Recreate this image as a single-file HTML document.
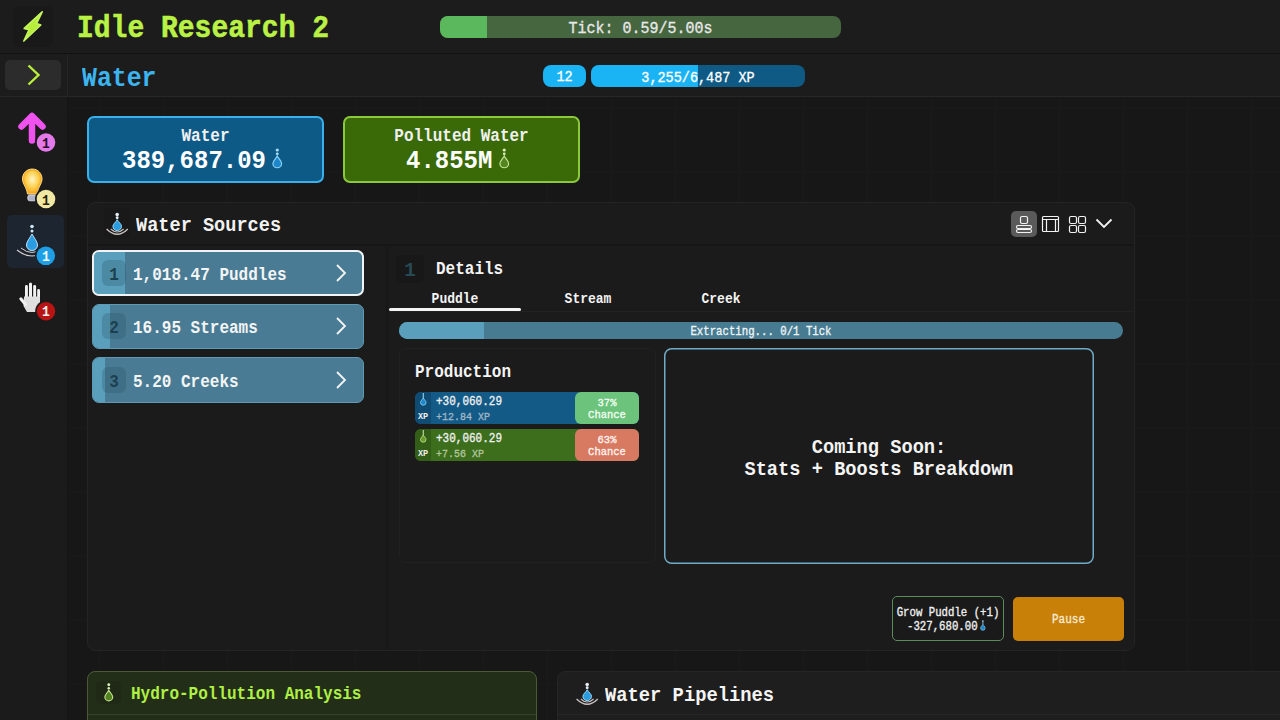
<!DOCTYPE html>
<html><head><meta charset="utf-8">
<style>
*{box-sizing:border-box;margin:0;padding:0}
html,body{width:1280px;height:720px;overflow:hidden}
body{background-color:#171717;background-image:linear-gradient(to right,#1b1b1b 1px,transparent 1px),linear-gradient(to bottom,#1a1a1a 1px,transparent 1px);background-size:64px 64px;background-position:35px 43px;font-family:"Liberation Mono",monospace;color:#f0f0f0;position:relative}
.a{position:absolute}
.b{font-weight:bold}
.x{white-space:pre;line-height:1;position:absolute;transform:scaleY(1.11);transform-origin:0 0.766em}
.m{-webkit-text-stroke:0.3px currentColor}
.c{text-align:center}
svg{position:absolute;overflow:visible}
</style></head><body>
<svg width="0" height="0" style="position:absolute">
  <defs>
    <symbol id="wsrc" viewBox="0 0 22 24" overflow="visible">
      <circle cx="11.2" cy="2.5" r="1.8" fill="#e4eef4"/>
      <circle cx="11.2" cy="5.8" r="1.45" fill="#e4eef4"/>
      <path d="M11.2 7.7 C10 10.2 6.9 12 6.9 14.3 A4.3 4.3 0 0 0 15.5 14.3 C15.5 12 12.4 10.2 11.2 7.7 Z" fill="#2a9de0" stroke="#9ad6f4" stroke-width="1"/>
      <path d="M0.6 17 Q11.2 27.5 21.8 17" fill="none" stroke="#cac0c0" stroke-width="1.3"/>
      <path d="M4.8 17 Q11.2 23 17.6 17" fill="none" stroke="#cac0c0" stroke-width="1.1"/>
    </symbol>
    <symbol id="drop" viewBox="0 0 11 21" overflow="visible">
      <circle cx="5.25" cy="2" r="1.6" fill="#a8e0f8"/>
      <circle cx="5.25" cy="5.8" r="1.4" fill="#a8e0f8"/>
      <path d="M5.25 7.9 C4 10.5 0.9 12.8 0.9 15.4 A4.35 4.35 0 0 0 9.6 15.4 C9.6 12.8 6.5 10.5 5.25 7.9 Z" fill="#1e86cc" stroke="#8ad4f4" stroke-width="1.2"/>
    </symbol>
    <symbol id="pdrop" viewBox="0 0 11 21" overflow="visible">
      <circle cx="5.25" cy="2" r="1.6" fill="#d8ecb8"/>
      <circle cx="5.25" cy="5.8" r="1.4" fill="#d8ecb8"/>
      <path d="M5.25 7.9 C4 10.5 0.9 12.8 0.9 15.4 A4.35 4.35 0 0 0 9.6 15.4 C9.6 12.8 6.5 10.5 5.25 7.9 Z" fill="#548420" stroke="#c4e494" stroke-width="1.2"/>
    </symbol>
  </defs>
</svg>

<!-- ===== header ===== -->
<div class="a" style="left:0;top:0;width:1280px;height:53px;background:#1c1c1c"></div>
<div class="a" style="left:0;top:53px;width:1280px;height:1px;background:#111"></div>
<div class="a" style="left:13px;top:6px;width:40px;height:41px;background:#191919;border-radius:6px"></div>
<svg style="left:0;top:0" width="60" height="50" viewBox="0 0 60 50">
  <path d="M42.2 11.8 L24.2 28.4 L29 29.8 L23.8 41 L40.8 25 L36.6 23.4 Z" fill="#b6ee3a" stroke="#c4f560" stroke-width="1.6" stroke-linejoin="round"/>
</svg>
<div class="x b" style="left:77px;top:16px;font-size:28px;color:#b9f245;-webkit-text-stroke:0.5px #b9f245">Idle Research 2</div>
<div class="a" style="left:440px;top:16px;width:401px;height:22px;border-radius:8px;background:#46663f;overflow:hidden">
  <div class="a" style="left:0;top:0;width:47px;height:22px;background:#5cb85c"></div>
</div>
<div class="x m c" style="left:440px;top:22px;width:401px;font-size:15px;color:#e8e8e8">Tick: 0.59/5.00s</div>

<div class="a" style="left:0;top:54px;width:1280px;height:43px;background:#1c1c1c"></div>
<div class="a" style="left:0;top:96px;width:1280px;height:1px;background:#272727"></div>
<div class="a" style="left:67px;top:54px;width:1px;height:42px;background:#242424"></div>
<div class="a" style="left:5px;top:60px;width:56px;height:30px;background:#2c2c2c;border-radius:5px"></div>
<svg style="left:26px;top:64px" width="16" height="22" viewBox="0 0 16 22">
  <path d="M2.5 1.5 L12.5 11 L2.5 20.5" fill="none" stroke="#b8f03c" stroke-width="2.4"/>
</svg>
<div class="x b" style="left:82px;top:67px;font-size:24.8px;color:#3cb4f0">Water</div>
<div class="a" style="left:543px;top:65px;width:43px;height:22px;border-radius:8px;background:#1ab4f5"></div>
<div class="x m c" style="left:543px;top:71px;width:43px;font-size:13.5px;color:#fff">12</div>
<div class="a" style="left:591px;top:65px;width:214px;height:22px;border-radius:8px;background:#0e5a85;overflow:hidden">
  <div class="a" style="left:0;top:0;width:107px;height:22px;background:#1ab4f5"></div>
</div>
<div class="x m c" style="left:591px;top:72px;width:214px;font-size:13.5px;color:#fff">3,255/6,487 XP</div>

<!-- ===== sidebar ===== -->
<div class="a" style="left:0;top:97px;width:67px;height:623px;background:#1b1b1b"></div>
<div class="a" style="left:67px;top:97px;width:1px;height:623px;background:#141414"></div>
<div class="a" style="left:7px;top:215px;width:57px;height:53px;background:#1c2530;border-radius:5px"></div>
<svg style="left:0;top:97px" width="67" height="240" viewBox="0 97 67 240">
  <path d="M21.5 126.5 L32 116 L42.5 126.5 M32 117 V140.5" fill="none" stroke="#ef52ef" stroke-width="6.5" stroke-linecap="round" stroke-linejoin="round"/>
  <circle cx="46" cy="142.5" r="11" fill="#1b1b1b"/>
  <circle cx="46" cy="142.5" r="9.3" fill="#e47ae9"/>
  <path d="M32.3 169 C26.5 169 22.5 173.5 22.5 179 C22.5 184 26.5 187 27.5 194 L37 194 C38 187 42 184 42 179 C42 173.5 38 169 32.3 169 Z" fill="#f7ae1c" stroke="#fbd88a" stroke-width="1"/>
  <defs><radialGradient id="bg1" cx="0.5" cy="0.4" r="0.6"><stop offset="0" stop-color="#fff6c8"/><stop offset="0.6" stop-color="#fcd050"/><stop offset="1" stop-color="#f6a820"/></radialGradient></defs><path d="M32.3 170.5 C27.5 170.5 24 174.5 24 179 C24 183.5 27.5 186.5 28.3 193 L36.3 193 C37.1 186.5 40.6 183.5 40.6 179 C40.6 174.5 37.1 170.5 32.3 170.5 Z" fill="url(#bg1)"/>
  <rect x="27.8" y="195" width="8.8" height="5.8" rx="2" fill="#b0b4c8" stroke="#e8e8f0" stroke-width="0.8"/>
  <circle cx="46" cy="199" r="11" fill="#1b1b1b"/>
  <circle cx="46" cy="199" r="9.3" fill="#efe7a2"/>
  <circle cx="32" cy="226.5" r="1.8" fill="#d0e8f8"/>
  <circle cx="32" cy="231" r="1.5" fill="#d0e8f8"/>
  <path d="M32 234 C30 238 26.5 241.5 26.5 245 A5.5 5.5 0 0 0 37.5 245 C37.5 241.5 34 238 32 234 Z" fill="#2a9ce2" stroke="#c0e4f8" stroke-width="1"/>
  <path d="M17 250 Q32 262 47 250" fill="none" stroke="#d8d0d0" stroke-width="1.2"/>
  <path d="M21 248 Q32 257 43 248" fill="none" stroke="#d8d0d0" stroke-width="1"/>
  <circle cx="45.8" cy="255.8" r="11" fill="#1c2530"/>
  <circle cx="45.8" cy="255.8" r="9.3" fill="#1e9fe6"/>
  <g fill="#f2f2f2"><rect x="25" y="285" width="2.9" height="14" rx="1.4"/><rect x="29" y="282.5" width="3" height="16" rx="1.5"/><rect x="33.2" y="285" width="2.9" height="14" rx="1.4"/><rect x="37.2" y="289" width="2.8" height="10" rx="1.4"/>
  <path d="M24 296.5 L40 296.5 L40 305 L37.5 312 L27 312 L23.5 306 Z" fill="#e0e0e0"/></g>
  <path d="M20.8 298.8 L25.5 304.5" stroke="#f2f2f2" stroke-width="3" stroke-linecap="round"/>
  <circle cx="46" cy="311.2" r="10.8" fill="#1b1b1b"/>
  <circle cx="46" cy="311.2" r="9.2" fill="#b81414"/>
</svg>
<div class="x b c" style="left:36px;top:138px;width:20px;font-size:13px;color:#2a0a2a">1</div>
<div class="x b c" style="left:36px;top:195px;width:20px;font-size:13px;color:#2a2208">1</div>
<div class="x b c" style="left:36px;top:251px;width:20px;font-size:13px;color:#f4f8fc">1</div>
<div class="x b c" style="left:36px;top:306px;width:20px;font-size:13px;color:#f8f0f0">1</div>

<!-- ===== resource cards ===== -->
<div class="a" style="left:87px;top:116px;width:237px;height:67px;border:2px solid #3ab0ea;border-radius:7px;background:#0e5a87"></div>
<div class="x b c" style="left:87px;top:129px;width:237px;font-size:16px;color:#f0f0f0">Water</div>
<div class="x b" style="left:122px;top:150px;font-size:24px;color:#fff">389,687.09</div>
<svg style="left:272px;top:148px" width="11" height="21"><use href="#drop"/></svg>

<div class="a" style="left:343px;top:116px;width:237px;height:67px;border:2px solid #8cc83c;border-radius:7px;background:#3a6a08"></div>
<div class="x b c" style="left:343px;top:129px;width:237px;font-size:16px;color:#f0f0f0">Polluted Water</div>
<div class="x b" style="left:406px;top:150px;font-size:24px;color:#fff">4.855M</div>
<svg style="left:499px;top:148px" width="11" height="21"><use href="#pdrop"/></svg>
<!-- ===== main panel ===== -->
<div class="a" style="left:87px;top:202px;width:1048px;height:449px;background:#1b1b1b;border:1px solid #242424;border-radius:8px"></div>
<div class="a" style="left:88px;top:244px;width:1046px;height:2px;background:#161616"></div>
<div class="a" style="left:104px;top:208px;width:26px;height:31px;background:#191919;border-radius:5px"></div>
<svg style="left:106px;top:212px" width="22" height="24"><use href="#wsrc"/></svg>
<div class="x b" style="left:136px;top:218px;font-size:18.6px;color:#f2f2f2">Water Sources</div>

<div class="a" style="left:1011px;top:211px;width:26px;height:26px;background:#5a5a5a;border-radius:5px"></div>
<svg style="left:1011px;top:211px" width="110" height="26" viewBox="0 0 110 26" fill="none" stroke="#f2f2f2" stroke-width="1.2">
  <rect x="9.5" y="5.5" width="7" height="7" rx="1.5"/>
  <rect x="5.5" y="14.5" width="15" height="3" rx="1.5"/>
  <rect x="5.5" y="18.5" width="15" height="3" rx="1.5"/>
  <rect x="31.5" y="5.5" width="16" height="15" rx="1"/>
  <path d="M31.5 8.5 H47.5 M35.5 8.5 V20.5 M44.5 8.5 V20.5"/>
  <rect x="58.5" y="5.5" width="7" height="7" rx="1.5"/>
  <rect x="67.5" y="5.5" width="7" height="7" rx="1.5"/>
  <rect x="58.5" y="14.5" width="7" height="7" rx="1.5"/>
  <rect x="67.5" y="14.5" width="7" height="7" rx="1.5"/>
  <path d="M85.5 8.5 L93 16 L100.5 8.5" stroke-width="1.8"/>
</svg>

<div class="a" style="left:386px;top:246px;width:2px;height:404px;background:#171717"></div>

<div class="a" style="left:92px;top:250px;width:272px;height:46px;border:2px solid #f0f4f6;border-radius:7px;background:#497c94;overflow:hidden">
  <div class="a" style="left:0;top:0;width:31px;height:46px;background:#5aa0bc"></div>
</div>
<div class="a" style="left:102px;top:260px;width:24px;height:26px;background:rgba(40,80,100,0.28);border-radius:6px"></div>
<div class="x b c" style="left:104px;top:268px;width:20px;font-size:16px;color:#1c4050">1</div>
<div class="x b" style="left:133px;top:268px;font-size:16px;color:#f4f4f4">1,018.47 Puddles</div>

<div class="a" style="left:92px;top:304px;width:272px;height:45px;border:1.5px solid #5f9ab4;border-radius:7px;background:#497c94;overflow:hidden">
  <div class="a" style="left:0;top:0;width:17px;height:46px;background:#5aa0bc"></div>
</div>
<div class="a" style="left:102px;top:313px;width:24px;height:26px;background:rgba(40,80,100,0.28);border-radius:6px"></div>
<div class="x b c" style="left:104px;top:321px;width:20px;font-size:16px;color:#1c4050">2</div>
<div class="x b" style="left:133px;top:321px;font-size:16px;color:#f4f4f4">16.95 Streams</div>

<div class="a" style="left:92px;top:357px;width:272px;height:46px;border:1.5px solid #5f9ab4;border-radius:7px;background:#497c94;overflow:hidden">
  <div class="a" style="left:0;top:0;width:12px;height:46px;background:#5aa0bc"></div>
</div>
<div class="a" style="left:102px;top:367px;width:24px;height:26px;background:rgba(40,80,100,0.28);border-radius:6px"></div>
<div class="x b c" style="left:104px;top:375px;width:20px;font-size:16px;color:#1c4050">3</div>
<div class="x b" style="left:133px;top:375px;font-size:16px;color:#f4f4f4">5.20 Creeks</div>

<svg style="left:330px;top:262px" width="22" height="130" viewBox="0 0 22 130" fill="none" stroke="#f4f4f4" stroke-width="1.8">
  <path d="M7 3 L15 11 L7 19"/>
  <path d="M7 56 L15 64 L7 72"/>
  <path d="M7 110 L15 118 L7 126"/>
</svg>

<!-- details -->
<div class="a" style="left:396px;top:255px;width:28px;height:28px;background:#181818;border-radius:5px"></div>
<div class="x b c" style="left:396px;top:262px;width:28px;font-size:19px;color:#264a56">1</div>
<div class="x b" style="left:436px;top:262px;font-size:16px;color:#f4f4f4">Details</div>
<div class="x b c" style="left:389px;top:293px;width:132px;font-size:13px;color:#f4f4f4">Puddle</div>
<div class="x b c" style="left:522px;top:293px;width:132px;font-size:13px;color:#f4f4f4">Stream</div>
<div class="x b c" style="left:655px;top:293px;width:132px;font-size:13px;color:#f4f4f4">Creek</div>
<div class="a" style="left:389px;top:311px;width:745px;height:1px;background:#222"></div>
<div class="a" style="left:389px;top:308px;width:132px;height:3px;background:#f4f4f4;border-radius:2px"></div>

<div class="a" style="left:399px;top:322px;width:724px;height:17px;border-radius:9px;background:#467b91;overflow:hidden">
  <div class="a" style="left:0;top:0;width:85px;height:17px;background:#5aa0bc"></div>
</div>
<div class="x m c" style="left:399px;top:327px;width:724px;font-size:10.7px;color:#eef4f6">Extracting... 0/1 Tick</div>

<!-- production -->
<div class="a" style="left:399px;top:348px;width:257px;height:215px;border:1px solid #212121;border-radius:7px;background:#1b1b1b"></div>
<div class="x b" style="left:415px;top:365px;font-size:16px;color:#f4f4f4">Production</div>

<div class="a" style="left:415px;top:392px;width:224px;height:32px;border-radius:6px;background:#135a86;overflow:hidden">
  <div class="a" style="left:0;top:0;width:16px;height:32px;background:#0f4b72"></div>
</div>
<svg style="left:418px;top:392px" width="11" height="14" viewBox="0 0 11 14">
  <path d="M5.25 1 V6.5" stroke="#a8e0f8" stroke-width="1"/>
  <path d="M5.25 6 C4.5 7.5 2.5 8.8 2.5 10.5 A2.75 2.75 0 0 0 8 10.5 C8 8.8 6 7.5 5.25 6 Z" fill="#1e86cc" stroke="#8ad4f4" stroke-width="0.8"/>
</svg>
<div class="x m" style="left:436px;top:397px;font-size:11px;color:#f0f0f0">+30,060.29</div>
<div class="x m" style="left:436px;top:413px;font-size:10px;color:#a0b6c6">+12.84 XP</div>
<div class="x b c" style="left:415px;top:413px;width:16px;font-size:8.5px;color:#f0f0f0">XP</div>
<div class="a" style="left:575px;top:392px;width:64px;height:32px;border-radius:6px;background:#6cc47c"></div>
<div class="x m c" style="left:575px;top:398px;width:64px;font-size:10.5px;line-height:11px;color:#f4fff4">37%<br>Chance</div>

<div class="a" style="left:415px;top:429px;width:224px;height:32px;border-radius:6px;background:#3d6e1c;overflow:hidden">
  <div class="a" style="left:0;top:0;width:16px;height:32px;background:#335e18"></div>
</div>
<svg style="left:418px;top:429px" width="11" height="14" viewBox="0 0 11 14">
  <path d="M5.25 1 V6.5" stroke="#d0e8b0" stroke-width="1"/>
  <path d="M5.25 6 C4.5 7.5 2.5 8.8 2.5 10.5 A2.75 2.75 0 0 0 8 10.5 C8 8.8 6 7.5 5.25 6 Z" fill="#6a9a2a" stroke="#c4e494" stroke-width="0.8"/>
</svg>
<div class="x m" style="left:436px;top:434px;font-size:11px;color:#f0f0f0">+30,060.29</div>
<div class="x m" style="left:436px;top:450px;font-size:10px;color:#b0c49c">+7.56 XP</div>
<div class="x b c" style="left:415px;top:450px;width:16px;font-size:8.5px;color:#f0f0f0">XP</div>
<div class="a" style="left:575px;top:429px;width:64px;height:32px;border-radius:6px;background:#d87a62"></div>
<div class="x m c" style="left:575px;top:435px;width:64px;font-size:10.5px;line-height:11px;color:#fff4f0">63%<br>Chance</div>

<!-- coming soon -->
<svg style="left:664px;top:348px" width="430" height="216"><rect x="0.75" y="0.75" width="428.5" height="214.5" rx="7" fill="none" stroke="#70acc8" stroke-width="1.5"/></svg>
<div class="x b c" style="left:664px;top:438px;width:430px;font-size:18.7px;line-height:20px;color:#f4f4f4">Coming Soon:<br>Stats + Boosts Breakdown</div>

<!-- buttons -->
<div class="a" style="left:892px;top:596px;width:112px;height:45px;border:1.5px solid #5c8c5c;border-radius:5px;background:#1a1a1a"></div>
<div class="x m c" style="left:892px;top:608px;width:112px;font-size:10.7px;color:#f0f0f0">Grow Puddle (+1)</div>
<div class="x m" style="left:907px;top:622px;font-size:10.7px;color:#f0f0f0">-327,680.00</div>
<svg style="left:980px;top:620px" width="6" height="11" viewBox="0 0 11 21"><use href="#drop"/></svg>
<div class="a" style="left:1013px;top:597px;width:111px;height:44px;border-radius:5px;background:#c98008"></div>
<div class="x m c" style="left:1013px;top:615px;width:111px;font-size:11px;color:#f8ead0">Pause</div>

<!-- bottom panels -->
<div class="a" style="left:87px;top:671px;width:450px;height:60px;border:1px solid #4a5a36;border-radius:8px;background:#232e19"></div>
<div class="a" style="left:88px;top:714px;width:448px;height:1px;background:#354428"></div>
<div class="a" style="left:96px;top:681px;width:25px;height:23px;border-radius:5px;background:#1f2915"></div>
<svg style="left:104px;top:683px" width="10" height="19" viewBox="0 0 11 21"><use href="#pdrop"/></svg>
<div class="x b" style="left:131px;top:687px;font-size:16px;color:#aef044">Hydro-Pollution Analysis</div>

<div class="a" style="left:557px;top:671px;width:740px;height:60px;border:1px solid #262626;border-radius:8px;background:#1e1e1e"></div>
<div class="a" style="left:558px;top:714px;width:740px;height:1px;background:#262626"></div>
<svg style="left:576px;top:682px" width="22" height="24"><use href="#wsrc"/></svg>
<div class="x b" style="left:605px;top:687px;font-size:18.8px;color:#f4f4f4">Water Pipelines</div>
</body></html>
